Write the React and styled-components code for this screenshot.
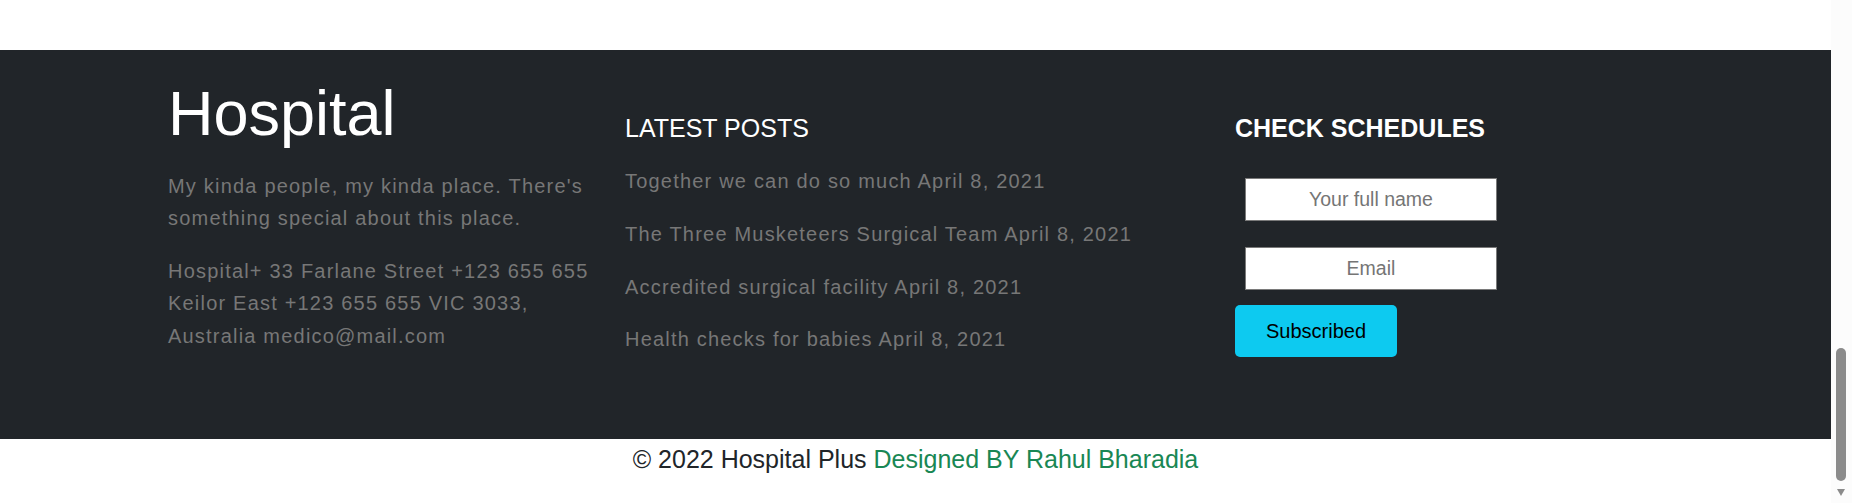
import React from "react";
import styled, { createGlobalStyle } from "styled-components";

const GlobalStyle = createGlobalStyle`
  body {
    margin: 0;
    background: #ffffff;
    font-family: "Liberation Sans", Arial, Helvetica, sans-serif;
    color: #212529;
    overflow: hidden;
  }
  * { box-sizing: border-box; }
`;

const Page = styled.div`
  width: calc(100% - 21px);
`;

const PageAbove = styled.div`
  height: 50px;
  background: #ffffff;
`;

const Footer = styled.footer`
  background: #212529;
  height: 389px;
  padding: 25px 0 0 168px;
  display: grid;
  grid-template-columns: 457px 610px 1fr;
  align-items: start;
`;

const Column = styled.div`
  display: flex;
  flex-direction: column;
  align-items: flex-start;
  padding-top: ${(p) => p.$top || 0}px;
  padding-right: ${(p) => p.$right || 0}px;
`;

const Brand = styled.h1`
  margin: 0 0 18px;
  font-size: 63px;
  font-weight: 400;
  line-height: 76.8px;
  color: #ffffff;
`;

const Text = styled.p`
  margin: 0 0 ${(p) => p.$gap ?? 20}px;
  font-size: 20px;
  line-height: 32.5px;
  letter-spacing: 1.2px;
  color: #777777;
`;

const ColTitle = styled.h4`
  margin: 0 0 ${(p) => p.$gap}px;
  font-size: ${(p) => p.$size}px;
  font-weight: ${(p) => (p.$bold ? 700 : 400)};
  line-height: 1.2;
  color: #ffffff;
`;

const Field = styled.input`
  width: 252px;
  height: 43px;
  margin: ${(p) => p.$top || 0}px 0 0 10px;
  border: 1px solid #7a7a7a;
  background: #ffffff;
  font-family: "Liberation Sans", Arial, sans-serif;
  font-size: 19.5px;
  text-align: center;
  color: #212529;
  outline: none;
  &::placeholder { color: #757575; }
`;

const SubscribeButton = styled.button`
  margin-top: 15px;
  width: 162px;
  height: 52px;
  border: none;
  border-radius: 5px;
  background: #0dcaf0;
  color: #000000;
  font-family: "Liberation Sans", Arial, sans-serif;
  font-size: 20px;
  cursor: pointer;
`;

const BottomBar = styled.div`
  height: 64px;
  padding-top: 2px;
  text-align: center;
  font-size: 25px;
  line-height: 1.5;
  color: #212529;
`;

const Credit = styled.span`
  color: #198754;
`;

const ScrollTrack = styled.div`
  position: fixed;
  top: 0;
  right: 0;
  width: 21px;
  height: 100%;
  background: #fcfcfc;
`;

const ScrollThumb = styled.div`
  position: absolute;
  left: 5px;
  top: 348px;
  width: 10px;
  height: 133px;
  border-radius: 5px;
  background: #8b8b8b;
`;

const ScrollArrow = styled.div`
  position: absolute;
  left: 6px;
  bottom: 7px;
  width: 0;
  height: 0;
  border-left: 4.5px solid transparent;
  border-right: 4.5px solid transparent;
  border-top: 7px solid #8b8b8b;
`;

const posts = [
  "Together we can do so much April 8, 2021",
  "The Three Musketeers Surgical Team April 8, 2021",
  "Accredited surgical facility April 8, 2021",
  "Health checks for babies April 8, 2021",
];

export default function App() {
  return (
    <>
      <GlobalStyle />
      <Page>
        <PageAbove />
        <Footer>
          <Column $right={17}>
            <Brand>Hospital</Brand>
            <Text>My kinda people, my kinda place. There's something special about this place.</Text>
            <Text>Hospital+ 33 Farlane Street +123 655 655 Keilor East +123 655 655 VIC 3033, Australia medico@mail.com</Text>
          </Column>
          <Column $top={38}>
            <ColTitle $size={25} $gap={22}>LATEST POSTS</ColTitle>
            {posts.map((p) => (
              <Text key={p} $gap={20.3}>{p}</Text>
            ))}
          </Column>
          <Column $top={38}>
            <ColTitle $size={25} $bold $gap={35}>CHECK SCHEDULES</ColTitle>
            <Field type="text" placeholder="Your full name" />
            <Field type="email" placeholder="Email" $top={26} />
            <SubscribeButton type="button">Subscribed</SubscribeButton>
          </Column>
        </Footer>
        <BottomBar>
          © 2022 Hospital Plus <Credit>Designed BY Rahul Bharadia</Credit>
        </BottomBar>
      </Page>
      <ScrollTrack aria-hidden="true">
        <ScrollThumb />
        <ScrollArrow />
      </ScrollTrack>
    </>
  );
}
